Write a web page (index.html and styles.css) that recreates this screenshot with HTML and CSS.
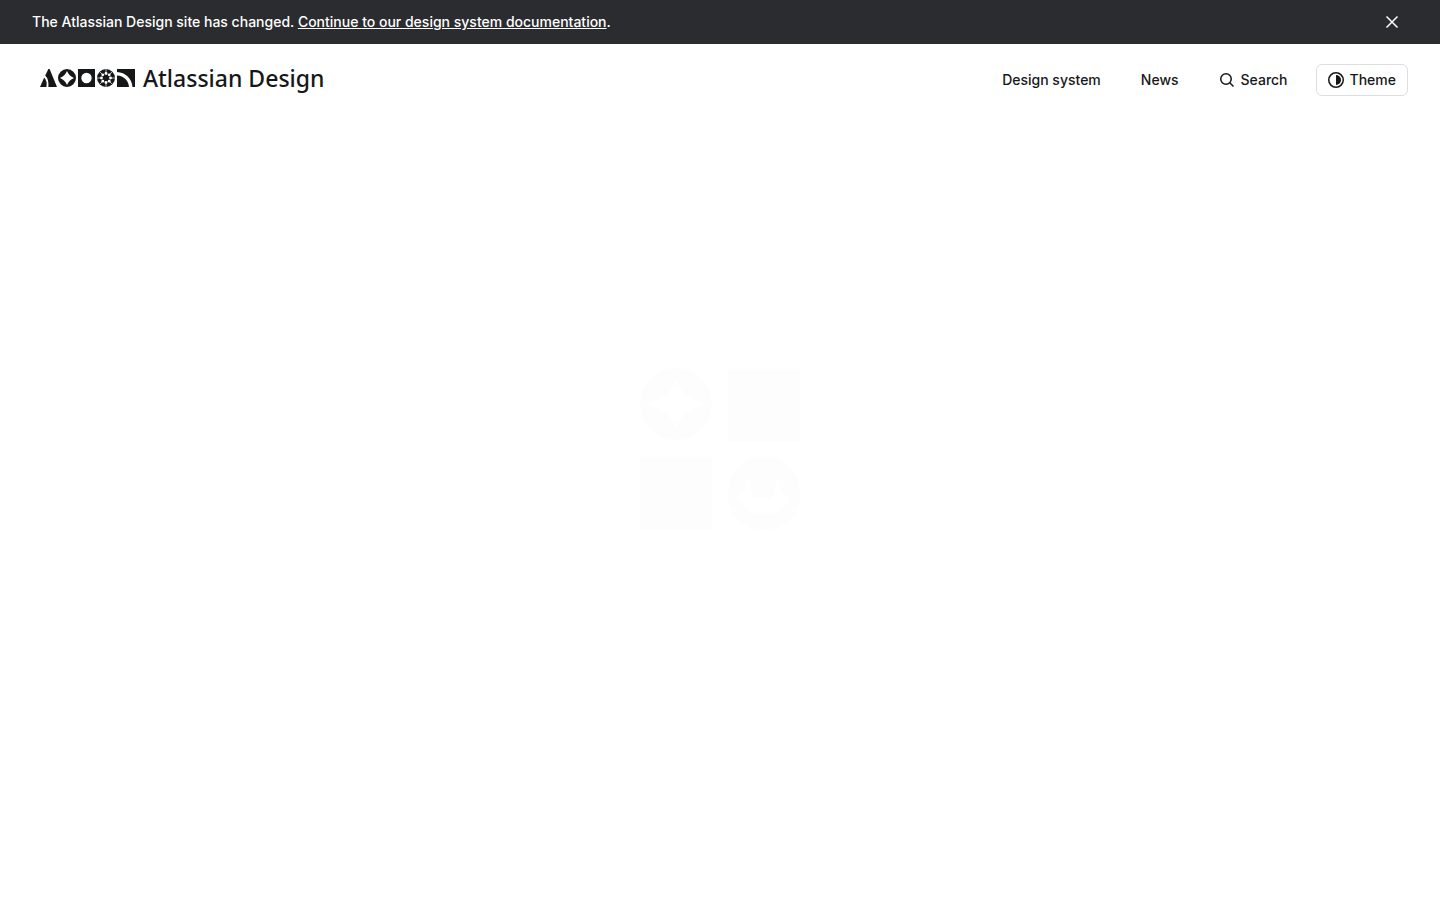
FILE: index.html
```html
<!DOCTYPE html>
<html lang="en">
<head>
    <meta charset="UTF-8">
    <meta name="viewport" content="width=device-width, initial-scale=1.0">
    <title>Atlassian Design</title>
    <link rel="stylesheet" href="styles.css">
</head>
<body>
    <div class="banner">
        <p>The Atlassian Design site has changed. <a href="#">Continue to our design system documentation</a>.</p>
        <button type="button" class="banner-close" aria-label="Dismiss">
            <svg width="16" height="16" viewBox="0 0 16 16" fill="none" stroke="currentColor" stroke-width="1.5">
                <path d="M2.5 2.5l11 11M13.5 2.5l-11 11"/>
            </svg>
        </button>
    </div>

    <header class="header">
        <a href="#" class="brand">
            <svg width="95" height="18" viewBox="0 0 95 18" fill="currentColor" aria-hidden="true">
                <!-- Peaks -->
                <path d="M0 18L4.200 8.500Q7.500 12 6.400 18Z"/>
                <path d="M5.200 6.500L8.400 0H9.600L17 18H8.400Q9.200 10.500 5.200 6.500Z"/>
                <!-- Circle with star -->
                <path fill-rule="evenodd" d="M27 0a9 9 0 1 1 0 18a9 9 0 1 1 0-18zM27 2Q25 7 20 9Q25 11 27 16Q29 11 34 9Q29 7 27 2z"/>
                <!-- Square with dot -->
                <path fill-rule="evenodd" d="M38 0h17v18h-17zM46.500 3.800a5.200 5.200 0 1 0 0 10.400a5.200 5.200 0 1 0 0-10.400z"/>
                <!-- Wheel -->
                <circle cx="66" cy="9" r="9"/>
                <g fill="#fff">
                    <circle cx="66" cy="4.500" r="1.400"/>
                    <circle cx="69.200" cy="5.800" r="1.400"/>
                    <circle cx="70.500" cy="9" r="1.400"/>
                    <circle cx="69.200" cy="12.200" r="1.400"/>
                    <circle cx="66" cy="13.500" r="1.400"/>
                    <circle cx="62.800" cy="12.200" r="1.400"/>
                    <circle cx="61.500" cy="9" r="1.400"/>
                    <circle cx="62.800" cy="5.800" r="1.400"/>
                </g>
                <path fill="none" stroke="#fff" stroke-width=".7" d="M66 0v4M66 14v4M57 9h4M71 9h4M59.600 2.600l3 3M69.400 12.400l3 3M72.400 2.600l-3 3M62.600 12.400l-3 3"/>
                <!-- Quarter arc -->
                <path d="M77 0h18v18h-2.500C92 9.500 85.500 3.500 77 3z"/>
                <path d="M77 6.500C84 7 88.500 11.500 89 18H77z"/>
            </svg>
            <span>Atlassian Design</span>
        </a>
        <nav class="nav">
            <a href="#">Design system</a>
            <a href="#">News</a>
            <button type="button" class="search">
                <svg width="16" height="16" viewBox="0 0 16 16" fill="none" stroke="currentColor" stroke-width="1.5" aria-hidden="true">
                    <circle cx="7" cy="7" r="5.250"/>
                    <path d="M10.800 10.800l3.700 3.700"/>
                </svg>
                Search
            </button>
            <button type="button" class="theme">
                <svg width="16" height="16" viewBox="0 0 16 16" aria-hidden="true">
                    <circle cx="8" cy="8" r="7.250" fill="none" stroke="currentColor" stroke-width="1.5"/>
                    <path d="M8 3a5 5 0 0 1 0 10z" fill="currentColor"/>
                </svg>
                Theme
            </button>
        </nav>
    </header>

    <main class="content">
        <svg class="loader" width="160" height="162" viewBox="0 0 160 162" fill="currentColor" role="img" aria-label="Loading">
            <path fill-rule="evenodd" d="M36 0a36 36 0 1 1 0 72a36 36 0 1 1 0-72zM36 10Q30 30 8 36Q30 42 36 62Q42 42 64 36Q42 30 36 10z"/>
            <rect x="88" y="1" width="72" height="72"/>
            <rect y="89" width="72" height="73"/>
            <path fill-rule="evenodd" d="M124 89a36 36 0 1 1 0 73a36 36 0 1 1 0-73zM108 107Q108 125 96 130L112 145H137L149 131Q138 124 138 107Q136 124 132 130H115Q110 124 108 107z"/>
        </svg>
    </main>
</body>
</html>
```

FILE: styles.css
```css
* {
    margin: 0;
    padding: 0;
    box-sizing: border-box;
}
body {
    display: flex;
    flex-direction: column;
    min-height: 100vh;
    font-family: Inter, sans-serif;
    font-size: 14px;
    font-weight: 500;
    line-height: 20px;
    background-color: #fff;
    color: #161719;
}
a {
    color: inherit;
    text-decoration: none;
}
button {
    display: flex;
    align-items: center;
    background: none;
    border: none;
    color: inherit;
    font: inherit;
    cursor: pointer;
}
svg {
    flex-shrink: 0;
}

/* Announcement */
.banner {
    display: flex;
    align-items: center;
    justify-content: space-between;
    padding: 6px 32px;
    background-color: #2b2c2f;
    color: #fff;
}
.banner a {
    text-decoration: underline;
}
.banner-close {
    justify-content: center;
    width: 32px;
    height: 32px;
}

/* Header */
.header {
    display: flex;
    align-items: center;
    justify-content: space-between;
    height: 72px;
    padding: 0 32px 0 40px;
}
.brand {
    display: flex;
    align-items: center;
    gap: 8px;
    padding-bottom: 4px;
    font-family: "Noto Sans", sans-serif;
    font-size: 23px;
    font-weight: 500;
    line-height: 32px;
}
.nav {
    display: flex;
    align-items: center;
    gap: 40px;
}
.search,
.theme {
    gap: 6px;
    height: 32px;
}
.theme {
    margin-left: -12px;
    padding: 0 11px;
    border: 1px solid #dddee1;
    border-radius: 6px;
}

/* Loading mark */
.content {
    display: flex;
    flex: 1;
    align-items: center;
    justify-content: center;
    padding-bottom: 118px;
}
.loader {
    color: #fdfdfd;
}
```
